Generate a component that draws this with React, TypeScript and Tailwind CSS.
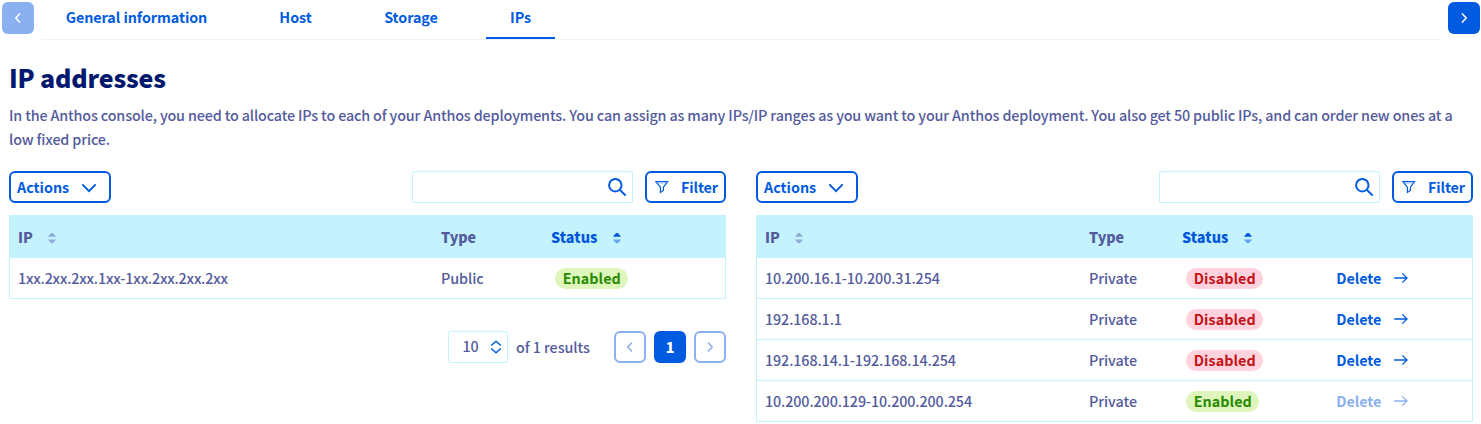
import React from "react";

type Status = "Enabled" | "Disabled";
type Row = { ip: string; type: string; status: Status; action?: "on" | "off" };

const tabs = [
  { label: "General information", width: "w-[189px]" },
  { label: "Host", width: "w-[81px]" },
  { label: "Storage", width: "w-[102px]" },
  { label: "IPs", width: "w-[69px]", active: true },
];

const publicRows: Row[] = [
  { ip: "1xx.2xx.2xx.1xx-1xx.2xx.2xx.2xx", type: "Public", status: "Enabled" },
];

const privateRows: Row[] = [
  { ip: "10.200.16.1-10.200.31.254", type: "Private", status: "Disabled", action: "on" },
  { ip: "192.168.1.1", type: "Private", status: "Disabled", action: "on" },
  { ip: "192.168.14.1-192.168.14.254", type: "Private", status: "Disabled", action: "on" },
  { ip: "10.200.200.129-10.200.200.254", type: "Private", status: "Enabled", action: "off" },
];

function Chevron({ dir, className }: { dir: "left" | "right"; className: string }) {
  return (
    <svg viewBox="0 0 8 12" className={className} fill="none" stroke="currentColor" strokeWidth="1.5">
      <path d={dir === "left" ? "M6 1.5L1.8 6L6 10.5" : "M2 1.5L6.2 6L2 10.5"} />
    </svg>
  );
}

function Sort({ active }: { active?: boolean }) {
  return (
    <svg viewBox="0 0 8 12" className={"h-3 w-2 " + (active ? "-ml-[0.4px] text-[#0057dc]" : "-ml-[0.6px] text-[#8fabd6]")} fill="currentColor">
      <path d="M0.2 4.8Q0.2 4.1 3 1.2Q4 0.2 5 1.2Q7.8 4.1 7.8 4.8Z" />
      <path d="M0.2 7.4H7.8Q7.8 8.1 5 10.9Q4 11.8 3 10.9Q0.2 8.1 0.2 7.4Z" className={active ? "text-[#62a5ef]" : ""} fill="currentColor" />
    </svg>
  );
}

function Toolbar() {
  return (
    <div className="flex h-8 items-center">
      <button className="flex h-8 w-[102px] items-center rounded-[6px] border-2 border-[#005be0] pl-[6px] font-bold text-[#005be0]">
        <span className="w-[52px] text-left">Actions</span>
        <svg viewBox="0 0 16 10" className="ml-[12px] mt-px h-[10px] w-4" fill="none" stroke="currentColor" strokeWidth="1.9">
          <path d="M1.3 1.4L8 8.1L14.7 1.4" />
        </svg>
      </button>
      <div className="ml-auto flex h-8 w-[221px] items-center justify-end rounded-[2px] border border-[#c4f3fe] pr-[5px] text-[#005be0]">
        <svg viewBox="0 0 20 20" className="h-5 w-5" fill="none" stroke="currentColor" strokeWidth="2">
          <circle cx="8.3" cy="8.2" r="6.2" />
          <path d="M12.8 12.7L18.7 18.6" />
        </svg>
      </div>
      <button className="ml-3 flex h-8 w-[81px] items-center rounded-[6px] border-2 border-[#005be0] pl-2 font-bold text-[#005be0]">
        <svg viewBox="0 0 14 14" className="h-[14px] w-[14px]" fill="none" stroke="currentColor" strokeWidth="1.2">
          <path d="M0.8 1.5H12.6L8.4 7.2V10.4L5.4 12.4V7.2Z" />
          <path d="M2.6 2.9H11" strokeWidth="0.5" />
        </svg>
        <span className="ml-3 tracking-[-0.1px]">Filter</span>
      </button>
    </div>
  );
}

function Table({ rows, wide }: { rows: Row[]; wide?: boolean }) {
  const grid = wide
    ? "grid grid-cols-[324px_93px_154.3px_1fr] items-center pl-2"
    : "grid grid-cols-[423px_110px_1fr] items-center pl-2";
  return (
    <div className="mt-3 border-x border-[#c4f3fe]">
      <div className={grid + " h-[43px] bg-[#c4f3fe] pb-px pt-px font-black"}>
        <div className="flex items-center">
          <span className="w-[31px]">IP</span>
          <div className="pt-[3px]"><Sort /></div>
        </div>
        <div className="tracking-[-0.1px]">Type</div>
        <div className="flex items-center text-[#0057dc]">
          <span className="w-[62px] tracking-[0.05px]">Status</span>
          <div className="pt-[3px]"><Sort active /></div>
        </div>
      </div>
      {rows.map((r) => (
        <div key={r.ip} className={grid + " h-[41px] border-b border-[#c4f3fe]"}>
          <div className={"pb-px " + (wide ? "tracking-[-0.12px]" : "tracking-[-0.18px]")}>{r.ip}</div>
          <div className="pb-px tracking-[-0.05px]">{r.type}</div>
          <div className="pl-1">
            <div
              className={
                "flex h-[21px] items-center justify-center rounded-full pl-[0.5px] font-bold tracking-[0.05px] " +
                (r.status === "Enabled" ? "w-[73px] bg-[#def5bc] text-[#288b00]" : "w-[77px] bg-[#ffd2dd] text-[#c51318]")
              }
            >
              {r.status}
            </div>
          </div>
          {r.action && (
            <div className={"flex items-center font-bold " + (r.action === "on" ? "text-[#005be0]" : "text-[#8ab0ef]")}>
              <span className="w-[56.5px] pb-px tracking-[-0.06px]">Delete</span>
              <svg viewBox="0 0 16 12" className="h-3 w-4" fill="none" stroke="currentColor" strokeWidth="1.3">
                <path d="M1.2 6H14M9.3 1.4L14 6L9.3 10.6" />
              </svg>
            </div>
          )}
        </div>
      ))}
    </div>
  );
}

export default function App() {
  return (
    <div className="h-[424px] w-[1481px] overflow-hidden bg-white font-['Noto_Sans_CJK_SC','Noto_Sans_CJK_JP',sans-serif] text-[14.33px] font-medium leading-6 text-[#535b9d]">
      <nav className="flex h-10 pl-[2px] pr-px">
        <button className="mt-[2px] flex h-8 w-8 items-center justify-center rounded-[6px] bg-[#8ab0ef] text-white">
          <Chevron dir="left" className="h-3 w-2" />
        </button>
        <div className="ml-2 flex flex-1 gap-6 border-b border-[#ebf4fb]">
          {tabs.map((t) => (
            <div
              key={t.label}
              className={
                "flex h-[39px] justify-center border-b-2 pt-[5px] font-bold tracking-[-0.06px] text-[#005be0] " +
                t.width +
                (t.active ? " border-[#005be0]" : " border-transparent")
              }
            >
              {t.label}
            </div>
          ))}
        </div>
        <button className="ml-2 mt-[2px] flex h-8 w-8 items-center justify-center rounded-[6px] bg-[#005be0] text-white">
          <Chevron dir="right" className="h-3 w-2" />
        </button>
      </nav>
      <main className="px-[9px] pr-2">
        <h1 className="mt-[21px] text-[25px] font-black leading-8 tracking-[-0.18px] text-[#00196e]">IP addresses</h1>
        <p className="mt-[10px] h-12 tracking-[-0.142px]">
          In the Anthos console, you need to allocate IPs to each of your Anthos deployments. You can assign as many IPs/IP ranges as you want to your Anthos deployment. You also get 50 public IPs, and can order new ones at a low fixed price.
        </p>
        <div className="mt-5 grid grid-cols-2 gap-[30px]">
          <section>
            <Toolbar />
            <Table rows={publicRows} />
            <div className="mt-8 flex h-8 items-center justify-end">
              <div className="flex h-8 w-[60px] items-center rounded-[2px] border border-[#c4f3fe] pl-[13.5px]">
                <span className="w-[27px] pb-[3px] tracking-[-0.1px]">10</span>
                <svg viewBox="0 0 12 14" className="h-[14px] w-3 text-[#005be0]" fill="none" stroke="currentColor" strokeWidth="1.4">
                  <path d="M1.2 5.6L6 1.2L10.8 5.6M1.2 8.4L6 12.8L10.8 8.4" />
                </svg>
              </div>
              <span className="ml-2 w-[98px] tracking-[-0.07px]">of 1 results</span>
              <div className="flex gap-2 font-bold">
                <div className="flex h-8 w-8 items-center justify-center rounded-[6px] border-2 border-[#8ab0ef] text-[#8ab0ef]">
                  <Chevron dir="left" className="h-3 w-2" />
                </div>
                <div className="flex h-8 w-8 items-center justify-center rounded-[6px] bg-[#005be0] font-black text-white">1</div>
                <div className="flex h-8 w-8 items-center justify-center rounded-[6px] border-2 border-[#8ab0ef] text-[#8ab0ef]">
                  <Chevron dir="right" className="h-3 w-2" />
                </div>
              </div>
            </div>
          </section>
          <section>
            <Toolbar />
            <Table rows={privateRows} wide />
          </section>
        </div>
      </main>
    </div>
  );
}
